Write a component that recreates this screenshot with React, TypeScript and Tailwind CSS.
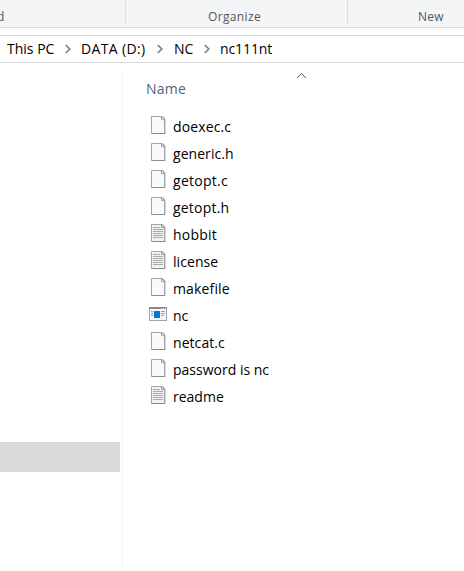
type Kind = "blank" | "text" | "app";

const files: { name: string; kind: Kind; tracking: string }[] = [
  { name: "doexec.c", kind: "blank", tracking: "tracking-[0.13px]" },
  { name: "generic.h", kind: "blank", tracking: "tracking-[0.05px]" },
  { name: "getopt.c", kind: "blank", tracking: "tracking-[0.28px]" },
  { name: "getopt.h", kind: "blank", tracking: "tracking-[0.2px]" },
  { name: "hobbit", kind: "text", tracking: "tracking-[0.2px]" },
  { name: "license", kind: "text", tracking: "tracking-[0.06px]" },
  { name: "makefile", kind: "blank", tracking: "tracking-[0.15px]" },
  { name: "nc", kind: "app", tracking: "tracking-[0px]" },
  { name: "netcat.c", kind: "blank", tracking: "tracking-[0.06px]" },
  { name: "password is nc", kind: "blank", tracking: "tracking-[0px]" },
  { name: "readme", kind: "text", tracking: "tracking-[0px]" },
];

function FileIcon({ kind }: { kind: Kind }) {
  if (kind === "app") {
    return (
      <svg width="18" height="18" viewBox="0 0 18 18" shapeRendering="crispEdges">
        <rect x="0.5" y="2.5" width="17" height="13" fill="#f7f7f7" stroke="#a0a4a7" />
        <path d="M0 2h18v2H0z" fill="#858b90" />
        <path d="M12 3.5h1M14 3.5h1M16 3.5h1" stroke="#d5d8da" />
        <path d="M5 6h6v7H5z" fill="#0078d7" />
        <path d="M2 6.5h2M2 8.5h2M2 10.5h2M12 6.5h4M12 8.5h4M12 10.5h3" stroke="#9ca0a4" />
      </svg>
    );
  }
  return (
    <svg width="18" height="18" viewBox="0 0 18 18">
      <path d="M2.5.5h10.5l3 3v14h-13.5z" fill={kind === "text" ? "#f2f2f2" : "#f9fafb"} />
      <path d="M2.5 17.5V.5h10.8" fill="none" stroke="#a3a3a3" />
      <path d="M13.2.7l2.6 2.6v14.2H2.5" fill="none" stroke="#8c8c8c" strokeWidth="1.1" />
      <path d="M12.5 1v2.7h3" fill="none" stroke="#a0a0a0" />
      {kind === "text" && (
        <path
          d="M4 3.5h7M4 5.5h10M4 7.5h10M4 9.5h10M4 11.5h10M4 13.5h10"
          stroke="#ababab"
          shapeRendering="crispEdges"
        />
      )}
    </svg>
  );
}

function Chevron() {
  return (
    <svg width="6" height="10" viewBox="0 0 6 10" fill="none" className="shrink-0">
      <path d="M.8 1l4 4-4 4" stroke="#7b7b7b" strokeWidth="1.6" />
    </svg>
  );
}

export default function App() {
  return (
    <div className="flex h-[571px] w-[464px] flex-col overflow-hidden bg-white font-['Open_Sans','Noto_Sans',sans-serif] text-black">
      <header className="flex h-7 shrink-0 border-b border-[#d9dadb] bg-[#f4f5f7] text-[12px] leading-[16px] text-[#53565a]">
        <div className="h-6 w-[126px] shrink-0 border-r border-[#dcdee0] pt-[9px]">
          <span className="-ml-[3px] block">d</span>
        </div>
        <div className="h-6 w-[222px] shrink-0 border-r border-[#dcdee0] pl-[82px] pt-[9px]">
          <span className="tracking-[0.35px]">Organize</span>
        </div>
        <div className="pl-[70px] pt-[9px]">
          <span className="tracking-[0.2px]">New</span>
        </div>
      </header>
      <nav className="mt-[7px] flex h-7 shrink-0 items-center border-y border-[#d9d9d9] text-[14px] leading-[20px]">
        <div className="flex w-[81px] items-center whitespace-nowrap pl-[7px]">
          <span className="w-[58px]">This PC</span><Chevron />
        </div>
        <div className="flex w-[93px] items-center whitespace-nowrap">
          <span className="w-[76px] tracking-[0.35px]">DATA (D:)</span><Chevron />
        </div>
        <div className="flex w-[46px] items-center whitespace-nowrap">
          <span className="w-[30px]">NC</span><Chevron />
        </div>
        <span className="tracking-[-0.1px]">nc111nt</span>
      </nav>
      <main className="flex min-h-0 flex-1">
        <aside className="w-[122px] shrink-0 pt-[379px]">
          <div className="h-[30px] w-[120px] bg-[#d9d9d9]" />
        </aside>
        <section className="mt-[9px] flex-1 border-l border-[#f5f5f5]">
          <div className="flex h-[41px] pl-[23px] text-[14px] leading-[20px] text-[#51657c]">
            <span className="w-[150px] pt-[7px] tracking-[0.2px]">Name</span>
            <svg width="11" height="7" viewBox="0 0 11 7" fill="none">
              <path d="M1 6l4.5-4.5L10 6" stroke="#555" />
            </svg>
          </div>
          <ul className="text-[14px] leading-[27px]">
            {files.map((f) => (
              <li key={f.name} className="flex h-[27px] pl-[26px]">
                <span className="w-6 pt-[3px]">
                  <FileIcon kind={f.kind} />
                </span>
                <span className={f.tracking}>{f.name}</span>
              </li>
            ))}
          </ul>
        </section>
      </main>
    </div>
  );
}
